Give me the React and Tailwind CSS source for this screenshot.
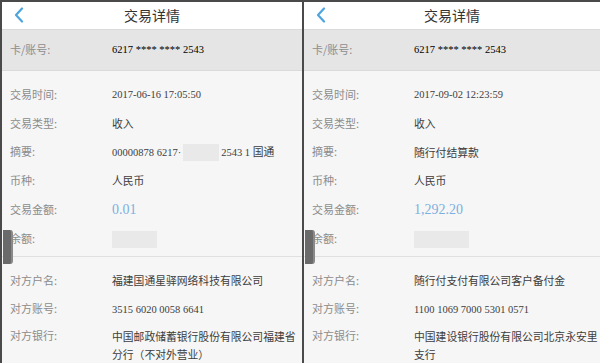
import React from "react";

const SERIF = "font-['Liberation_Serif','Noto_Sans_CJK_SC',serif]";

function Row({ label, children, tall })
{
    return (
        <div className={"flex " + (tall ? "items-start pt-[4px] h-[40px]" : "items-center h-[28.8px]")}>
            <div className="w-[102px] shrink-0 text-[11px] text-[#8c8c8c]">{label}</div>
            <div className="flex-1 text-[10.8px] text-[#3d3d3d] leading-[18px]">{children}</div>
        </div>
    );
}

function Blur({ w })
{
    return <span className={"inline-block h-[17px] align-middle bg-[#e9e9e9] " + w} />;
}

function Num({ children, className })
{
    return <span className={SERIF + " " + (className || "text-[10.5px]")}>{children}</span>;
}

function Panel({ data, last })
{
    return (
        <div className={"relative flex flex-col h-full border-l-2 border-[#4a4a4a] bg-[#f6f6f6] " + (last ? "flex-1" : "w-[302px]")}>
            <div className="grid grid-cols-[40px_1fr_40px] items-center h-[28px] bg-white">
                <svg className="ml-[11px]" width="12" height="16" viewBox="0 0 12 16">
                    <path d="M9 1.5 L3 8 L9 14.5" fill="none" stroke="#4ea5de" strokeWidth="2.2" strokeLinecap="round" strokeLinejoin="round" />
                </svg>
                <div className="text-center text-[14px] text-[#333]">交易详情</div>
                <div />
            </div>

            <div className="flex items-center h-[44px] px-[8px] bg-[#e5e5e5] border-y border-[#dadada]">
                <div className="w-[102px] text-[11px] text-[#8e8e8e]">卡/账号:</div>
                <Num>6217 **** **** 2543</Num>
            </div>

            <div className="px-[8px] pt-[9px] pb-[4px] border-b border-[#e0e0e0]">
                <Row label="交易时间:"><Num>{data.time}</Num></Row>
                <Row label="交易类型:">收入</Row>
                <Row label="摘要:">{data.summary}</Row>
                <Row label="币种:">人民币</Row>
                <Row label="交易金额:"><Num className="text-[14px] text-[#7db0df]">{data.amount}</Num></Row>
                <Row label="余额:"><Blur w={data.balW} /></Row>
            </div>

            <div className="pl-[8px] pt-[8px]">
                <Row label="对方户名:">{data.name}</Row>
                <Row label="对方账号:"><Num>{data.account}</Num></Row>
                <Row label="对方银行:" tall>{data.bank}</Row>
            </div>

            <div className="absolute left-[1px] top-[228px] w-[10px] h-[34px] rounded-r-[3px] bg-[#6a6a6a] border-r-2 border-[#8a8a8a]" />
        </div>
    );
}

export default function App()
{
    const left = {
        time: "2017-06-16 17:05:50",
        summary: (
            <span className="whitespace-nowrap">
                <Num>00000878 6217·</Num>
                <Blur w="w-[36px] mx-[2px]" />
                <Num>2543 1 </Num>
                国通
            </span>
        ),
        amount: "0.01",
        balW: "w-[45px]",
        name: "福建国通星驿网络科技有限公司",
        account: "3515 6020 0058 6641",
        bank: "中国邮政储蓄银行股份有限公司福建省分行（不对外营业）",
    };
    const right = {
        time: "2017-09-02 12:23:59",
        summary: "随行付结算款",
        amount: "1,292.20",
        balW: "w-[55px]",
        name: "随行付支付有限公司客户备付金",
        account: "1100 1069 7000 5301 0571",
        bank: "中国建设银行股份有限公司北京永安里支行",
    };

    return (
        <div className="flex w-[600px] h-[363px] overflow-hidden border-t-2 border-[#4a4a4a] bg-white font-['Noto_Sans_CJK_SC','Noto_Sans',sans-serif]">
            <Panel data={left} />
            <Panel data={right} last />
        </div>
    );
}
